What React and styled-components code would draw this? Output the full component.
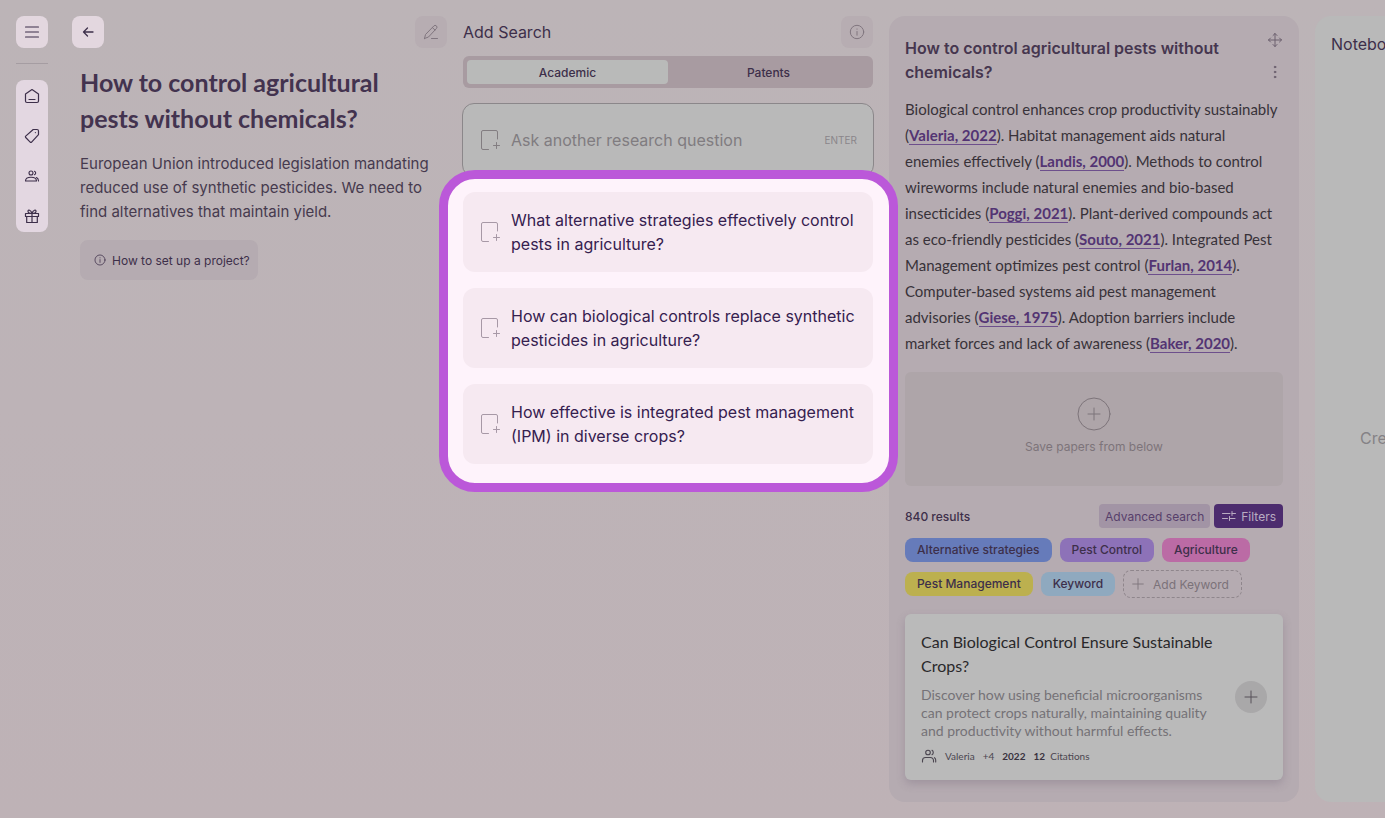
import React, { useState } from "react";
import styled, { createGlobalStyle } from "styled-components";

const sans = `Inter, "Liberation Sans", sans-serif`;
const lato = `Lato, "Liberation Sans", sans-serif`;
const ink = "#3d2f4a";

const GlobalStyle = createGlobalStyle`
  *, *::before, *::after { box-sizing: border-box; }
  body { margin: 0; background: #bdb3b7; font-family: ${sans}; color: ${ink}; overflow-x: hidden; }
  button, input { font: inherit; color: inherit; }
  h1, h2, h3, p, ul { margin: 0; padding: 0; }
  ul { list-style: none; }
`;

const Page = styled.div`
  display: grid;
  grid-template-columns: 32px minmax(280px, 1fr) 410px 410px 70px;
  column-gap: 16px;
  min-height: 100vh;
  padding: 16px 0 16px 16px;
  background: linear-gradient(180deg, #bcb4b7 0%, #bdb3b7 50%, #beb2b6 100%);
`;

const Sidebar = styled.aside`
  display: flex;
  flex-direction: column;
  gap: 16px;
`;

const Divider = styled.hr`
  width: 100%;
  height: 1px;
  margin: -1px 0 0;
  border: 0;
  background: #a59da2;
`;

const IconButton = styled.button`
  display: grid;
  place-items: center;
  flex: none;
  width: 32px;
  height: 32px;
  padding: 0;
  border: 0;
  border-radius: 8px;
  background: ${(p) => (p.$quiet ? "#b7adb2" : "#e3d7df")};
  color: ${(p) => (p.$quiet ? "#81767f" : ink)};
`;

const Nav = styled.nav`
  display: flex;
  flex-direction: column;
  gap: 8px;
  border-radius: 8px;
  background: #e3d7e1;
`;

const NavLink = styled.a`
  display: grid;
  place-items: center;
  height: 32px;
  color: ${ink};
`;

const Project = styled.section`
  padding-left: 8px;
`;

const Bar = styled.div`
  display: flex;
  align-items: center;
  justify-content: space-between;
  height: 32px;
`;

const ProjectBody = styled.div`
  display: flex;
  flex-direction: column;
  align-items: flex-start;
  gap: 16px;
  padding: 16px 0 0 8px;
`;

const ProjectTitle = styled.h1`
  max-width: 340px;
  font: 700 25px/36px ${lato};
  color: #43334f;
`;

const ProjectText = styled.p`
  font-size: 15px;
  line-height: 24px;
  color: #463a4e;
`;

const HelpButton = styled.button`
  display: flex;
  align-items: center;
  gap: 6px;
  height: 40px;
  padding: 0 8px 0 14px;
  border: 0;
  border-radius: 8px;
  background: #b5abb1;
  font-size: 12px;
  white-space: nowrap;
`;

const Search = styled.section`
  display: flex;
  flex-direction: column;
  min-width: 0;
`;

const SearchTitle = styled.h2`
  font-size: 16px;
  font-weight: 400;
`;

const Tabs = styled.div`
  display: grid;
  grid-template-columns: 1fr 1fr;
  height: 32px;
  margin: 8px 0 15px;
  padding: 4px;
  border-radius: 6px;
  background: #a89ba1;
`;

const Tab = styled.button`
  padding: 0;
  border: 0;
  border-radius: 4px;
  background: ${(p) => (p.$active ? "#b9bab9" : "transparent")};
  font-size: 12px;
  font-weight: 500;
`;

const Question = styled.label`
  display: flex;
  align-items: center;
  gap: 10px;
  height: 74px;
  margin: 0 -1px;
  padding: 0 16px 0 18px;
  border: 1px solid #8b878a;
  border-radius: 12px;
  background: #b9b9b9;
  color: #827d81;
`;

const QuestionInput = styled.input`
  flex: 1;
  min-width: 0;
  padding: 0;
  border: 0;
  outline: 0;
  background: transparent;
  font-size: 16px;
  &::placeholder { color: #807c80; opacity: 1; }
`;

const EnterHint = styled.span`
  font-size: 10px;
  color: #8a868a;
`;

const Suggestions = styled.ul`
  position: relative;
  z-index: 1;
  display: flex;
  flex-direction: column;
  gap: 16px;
  margin-top: 15px;

  &::before {
    content: "";
    position: absolute;
    z-index: -1;
    inset: -22px -25px -28px -24px;
    border: 9px solid #bb58d9;
    border-radius: 36px;
    background: #fef3fb;
  }
`;

const Suggestion = styled.button`
  display: flex;
  align-items: center;
  gap: 10px;
  width: 100%;
  height: 80px;
  padding: 0 16px 0 18px;
  border: 0;
  border-radius: 12px;
  background: #f6e9f1;
  color: #35204f;
  font-size: 16px;
  line-height: 24px;
  text-align: left;
  svg { color: #a798a6; }
`;

const Results = styled.section`
  min-width: 0;
  padding: 20px 16px 22px;
  border-radius: 16px;
  background: #b5abb1;
`;

const ResultsHead = styled.header`
  display: flex;
  justify-content: space-between;
`;

const ResultsTitle = styled.h2`
  max-width: 340px;
  font-size: 16px;
  font-weight: 600;
  line-height: 24px;
  color: #46364f;
`;

const Tools = styled.div`
  display: flex;
  flex-direction: column;
  gap: 16px;
  height: 48px;
  margin-top: -4px;
`;

const ToolButton = styled.button`
  display: grid;
  place-items: center;
  width: 16px;
  height: 16px;
  padding: 0;
  border: 0;
  background: none;
  color: #6c606f;
`;

const Summary = styled.p`
  margin-top: 12px;
  font: 400 15px/26px ${lato};
  color: #383239;
`;

const Cite = styled.a`
  border-bottom: 1px solid #6d4f8c;
  color: #533473;
  font-weight: 700;
  text-decoration: none;
`;

const SaveBox = styled.div`
  display: flex;
  flex-direction: column;
  align-items: center;
  justify-content: center;
  gap: 8px;
  height: 114px;
  margin: 16px 0 18px;
  padding-bottom: 8px;
  border-radius: 6px;
  background: #aea5a9;
  color: #7d747a;
  font-size: 12px;
`;

const ResultBar = styled.div`
  display: flex;
  align-items: center;
  gap: 4px;
  height: 24px;
`;

const ResultCount = styled.span`
  flex: 1;
  font-size: 12px;
  font-weight: 500;
`;

const BarButton = styled.button`
  display: flex;
  align-items: center;
  gap: 4px;
  height: 24px;
  padding: 0 ${(p) => (p.$strong ? 7 : 6)}px;
  border: 0;
  border-radius: 4px;
  background: ${(p) => (p.$strong ? "#4c2c6e" : "#a294a5")};
  color: ${(p) => (p.$strong ? "#b9acc2" : "#573f6b")};
  font-size: 12px;
  white-space: nowrap;
`;

const Tags = styled.ul`
  display: flex;
  flex-wrap: wrap;
  align-items: center;
  gap: 8px;
  margin: 10px 0 16px;
`;

const Tag = styled.li`
  padding: 0 12px;
  border-radius: 8px;
  background: ${(p) => p.$tone};
  font-size: 12px;
  font-weight: 500;
  line-height: 24px;
`;

const AddTag = styled.button`
  display: flex;
  align-items: center;
  gap: 8px;
  height: 28px;
  padding: 0 12px 0 7px;
  border: 1px dashed #8f868c;
  border-radius: 8px;
  background: none;
  color: #7b7279;
  font-size: 12px;
`;

const Paper = styled.article`
  display: flex;
  align-items: center;
  gap: 16px;
  padding: 16px;
  border-radius: 6px;
  background: #bababa;
  box-shadow: 0 4px 8px rgba(110, 95, 115, 0.3);
`;

const PaperText = styled.div`
  flex: 1;
  min-width: 0;
  font-family: ${lato};
`;

const PaperTitle = styled.h3`
  font-size: 16px;
  font-weight: 400;
  line-height: 24px;
  color: #29282a;
`;

const PaperAbstract = styled.p`
  margin: 8px 0;
  font-size: 14px;
  line-height: 18px;
  color: #757277;
`;

const Meta = styled.div`
  display: flex;
  align-items: center;
  gap: 8px;
  height: 16px;
  font-size: 10px;
  color: #4b4650;
  b { color: #39323e; }
`;

const RoundButton = styled.button`
  display: grid;
  place-items: center;
  flex: none;
  width: 32px;
  height: 32px;
  padding: 0;
  border: 0;
  border-radius: 50%;
  background: #a9a8a9;
  color: #565158;
`;

const Notebook = styled.section`
  display: flex;
  flex-direction: column;
  overflow: hidden;
  padding-left: 16px;
  background: #b9b9b9;
  border-radius: 16px 0 0 16px;
  white-space: nowrap;
`;

const NotebookTitle = styled.h2`
  padding-top: 16px;
  font-size: 16px;
  font-weight: 400;
  line-height: 24px;
`;

const NotebookHint = styled.p`
  margin: auto 0;
  padding: 18px 0 0 29px;
  font-size: 16px;
  color: #858286;
`;

const Icon = styled.svg`
  flex: none;
  display: block;
`;

const Svg = ({ size = 16, box = 16, w = 1, children }) => (
  <Icon width={size} height={size} viewBox={`0 0 ${box} ${box}`} fill="none" stroke="currentColor"
    strokeWidth={w} strokeLinecap="round" strokeLinejoin="round" aria-hidden="true">
    {children}
  </Icon>
);

const MenuIcon = () => <Svg w={1.1}><path d="M1.500 3.500h13M1.500 8.500h13M1.500 13.500h13" transform="translate(0 -.5)" /></Svg>;
const BackIcon = () => <Svg w={1.3}><path d="M13 8H3.500M7.500 4L3.500 8l4 4" /></Svg>;
const EditIcon = () => (
  <Svg><path d="M1.500 14.500l1-4L10.800 2a1.700 1.700 0 0 1 2.700 2.400L5.500 13l-4 1.500zM9.300 3.500l2.700 2.500M8.500 14.500h6" /></Svg>
);
const HomeIcon = () => <Svg w={1.2}><path d="M1.500 6L8 1.500 14.500 6v7a1.500 1.500 0 0 1-1.500 1.500H3A1.500 1.500 0 0 1 1.500 13zM5 11.500h6" /></Svg>;
const TagIcon = () => (
  <Svg w={1.2}><path d="M9.200 1.500h3.800a1.500 1.500 0 0 1 1.500 1.500v3.600L7.600 14.100a1 1 0 0 1-1.400 0L1.700 9.500a1 1 0 0 1 0-1.400z" /><circle cx="11.300" cy="4.700" r=".2" strokeWidth=".6" /></Svg>
);
const PeopleIcon = () => (
  <Svg w={1.1}><circle cx="7" cy="5" r="2" /><path d="M1.500 13c0-2.400 2-3.700 5.500-3.700s5.500 1.300 5.500 3.700zM10.500 3.200c1.600.8 1.600 2.800 0 3.600M12.500 9.500c1.300.6 2 1.800 2 3.500" /></Svg>
);
const GiftIcon = () => (
  <Svg w={1.2}><path d="M1.500 5.500h13v3h-13zM2.700 8.500h10.600v6H2.700zM8 5.500v9M8 5.300C7 2 3.800 1 4 3.500c.1 1.300 1.800 2 4 1.800C9 2 12.200 1 12 3.500c-.1 1.300-1.800 2-4 1.800" /></Svg>
);
const InfoIcon = ({ size }) => <Svg size={size}><circle cx="8" cy="8" r="6.700" /><path d="M8 7.500v3.700M8 5v.2" /></Svg>;
const NoteIcon = () => (
  <Svg size={20} box={20}><path d="M16.500 9V2A1.500 1.500 0 0 0 15 .500H2A1.500 1.500 0 0 0 .500 2v16A1.500 1.500 0 0 0 2 19.500h5.500M15.500 12.500v6M12.500 15.500h6" /></Svg>
);
const MoveIcon = () => (
  <Svg><path d="M8 1.500v13M1.500 8h13M6 3.500l2-2 2 2M6 12.500l2 2 2-2M3.500 6l-2 2 2 2M12.500 6l2 2-2 2" /></Svg>
);
const DotsIcon = () => <Svg><g fill="currentColor"><circle cx="8" cy="3" r=".8" /><circle cx="8" cy="8" r=".8" /><circle cx="8" cy="13" r=".8" /></g></Svg>;
const PlusIcon = ({ size = 16 }) => <Svg size={size}><path d="M8 2v12M2 8h12" /></Svg>;
const CirclePlusIcon = () => <Svg size={34} box={34}><circle cx="17" cy="17" r="16" /><path d="M17 11v12M11 17h12" /></Svg>;
const FilterIcon = () => <Svg><path d="M1.500 5.500h7.500M11 3.500v4M11 5.500h3.500M1.500 10.500h5M8.500 8.500v4M8.500 10.500H14" /></Svg>;
const AuthorsIcon = () => (
  <Svg w={1.1}><circle cx="7" cy="4.500" r="2.300" /><path d="M1.500 14v-1.500a3 3 0 0 1 3-3h5a3 3 0 0 1 3 3V14M11 2.300c1.700.8 1.700 3.600 0 4.400M13.500 9.700c.8.500 1.200 1.300 1.200 2.300v2" /></Svg>
);

const navItems = [
  ["Home", HomeIcon],
  ["Tags", TagIcon],
  ["People", PeopleIcon],
  ["Gifts", GiftIcon],
];

const suggestions = [
  "What alternative strategies effectively control pests in agriculture?",
  "How can biological controls replace synthetic pesticides in agriculture?",
  "How effective is integrated pest management (IPM) in diverse crops?",
];

const findings = [
  ["Biological control enhances crop productivity sustainably", "Valeria, 2022"],
  ["Habitat management aids natural enemies effectively", "Landis, 2000"],
  ["Methods to control wireworms include natural enemies and bio-based insecticides", "Poggi, 2021"],
  ["Plant-derived compounds act as eco-friendly pesticides", "Souto, 2021"],
  ["Integrated Pest Management optimizes pest control", "Furlan, 2014"],
  ["Computer-based systems aid pest management advisories", "Giese, 1975"],
  ["Adoption barriers include market forces and lack of awareness", "Baker, 2020"],
];

const tags = [
  ["Alternative strategies", "#667bba"],
  ["Pest Control", "#8d72b8"],
  ["Agriculture", "#bb6ba5"],
  ["Pest Management", "#bcb04f"],
  ["Keyword", "#8fa9bf"],
];

export default function App() {
  const [tab, setTab] = useState("Academic");
  return (
    <>
      <GlobalStyle />
      <Page>
        <Sidebar>
          <IconButton aria-label="Menu"><MenuIcon /></IconButton>
          <Divider />
          <Nav aria-label="Main">
            {navItems.map(([label, Glyph]) => (
              <NavLink key={label} href="#" aria-label={label}><Glyph /></NavLink>
            ))}
          </Nav>
        </Sidebar>

        <Project>
          <Bar>
            <IconButton aria-label="Back"><BackIcon /></IconButton>
            <IconButton $quiet aria-label="Edit project"><EditIcon /></IconButton>
          </Bar>
          <ProjectBody>
            <ProjectTitle>How to control agricultural pests without chemicals?</ProjectTitle>
            <ProjectText>
              European Union introduced legislation mandating reduced use of synthetic pesticides. We need to find alternatives that maintain yield.
            </ProjectText>
            <HelpButton><InfoIcon size={12} />How to set up a project?</HelpButton>
          </ProjectBody>
        </Project>

        <Search>
          <Bar>
            <SearchTitle>Add Search</SearchTitle>
            <IconButton $quiet aria-label="About search"><InfoIcon /></IconButton>
          </Bar>
          <Tabs role="tablist">
            {["Academic", "Patents"].map((name) => (
              <Tab key={name} role="tab" aria-selected={tab === name} $active={tab === name} onClick={() => setTab(name)}>
                {name}
              </Tab>
            ))}
          </Tabs>
          <Question>
            <NoteIcon />
            <QuestionInput type="text" aria-label="Research question" placeholder="Ask another research question" />
            <EnterHint>ENTER</EnterHint>
          </Question>
          <Suggestions>
            {suggestions.map((text) => (
              <li key={text}>
                <Suggestion><NoteIcon /><span>{text}</span></Suggestion>
              </li>
            ))}
          </Suggestions>
        </Search>

        <Results>
          <ResultsHead>
            <ResultsTitle>How to control agricultural pests without chemicals?</ResultsTitle>
            <Tools>
              <ToolButton aria-label="Move"><MoveIcon /></ToolButton>
              <ToolButton aria-label="More"><DotsIcon /></ToolButton>
            </Tools>
          </ResultsHead>
          <Summary>
            {findings.map(([text, source]) => (
              <React.Fragment key={source}>
                {`${text} (`}<Cite href="#">{source}</Cite>{"). "}
              </React.Fragment>
            ))}
          </Summary>
          <SaveBox>
            <CirclePlusIcon />
            <span>Save papers from below</span>
          </SaveBox>
          <ResultBar>
            <ResultCount>840 results</ResultCount>
            <BarButton>Advanced search</BarButton>
            <BarButton $strong><FilterIcon />Filters</BarButton>
          </ResultBar>
          <Tags>
            {tags.map(([name, tone]) => <Tag key={name} $tone={tone}>{name}</Tag>)}
            <li><AddTag><PlusIcon size={14} />Add Keyword</AddTag></li>
          </Tags>
          <Paper>
            <PaperText>
              <PaperTitle>Can Biological Control Ensure Sustainable Crops?</PaperTitle>
              <PaperAbstract>
                Discover how using beneficial microorganisms can protect crops naturally, maintaining quality and productivity without harmful effects.
              </PaperAbstract>
              <Meta>
                <AuthorsIcon />
                <span>Valeria</span>
                <span>+4</span>
                <b>2022</b>
                <span><b>12</b>&nbsp; Citations</span>
              </Meta>
            </PaperText>
            <RoundButton aria-label="Save paper"><PlusIcon /></RoundButton>
          </Paper>
        </Results>

        <Notebook>
          <NotebookTitle>Notebook</NotebookTitle>
          <NotebookHint>Create</NotebookHint>
        </Notebook>
      </Page>
    </>
  );
}
